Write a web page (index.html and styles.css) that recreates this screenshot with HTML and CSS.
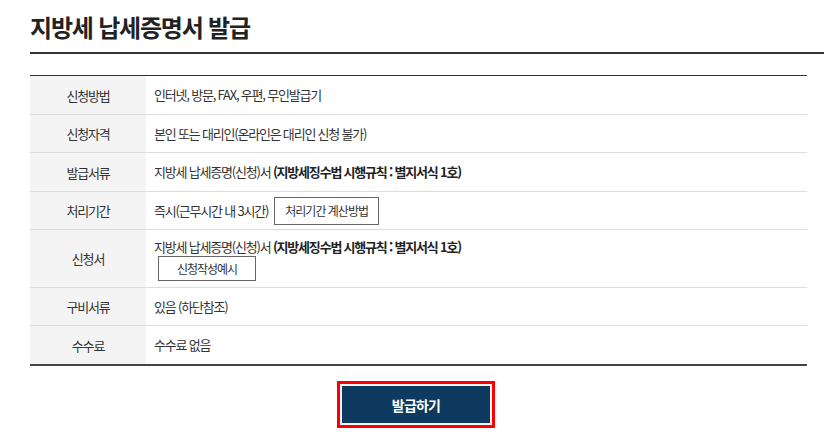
FILE: index.html
```html
<!DOCTYPE html>
<html lang="ko">
<head>
<meta charset="utf-8">
<link rel="stylesheet" href="styles.css">
</head>
<body>
<div class="page">
  <h1 class="title">지방세 납세증명서 발급</h1>
  <div class="rule"></div>
  <div class="info">
    <div class="row h39"><div class="th">신청방법</div><div class="td"><span>인터넷, 방문, FAX, 우편, 무인발급기</span></div></div>
    <div class="row"><div class="th">신청자격</div><div class="td"><span>본인 또는 대리인(온라인은 대리인 신청 불가)</span></div></div>
    <div class="row h39"><div class="th">발급서류</div><div class="td"><span>지방세 납세증명(신청)서 <b>(지방세징수법 시행규칙 : 별지서식 1호)</b></span></div></div>
    <div class="row"><div class="th">처리기간</div><div class="td"><span>즉시(근무시간 내 3시간)</span><span class="btn btn-a">처리기간 계산방법</span></div></div>
    <div class="row tall"><div class="th">신청서</div><div class="td td-stack"><div>지방세 납세증명(신청)서 <b>(지방세징수법 시행규칙 : 별지서식 1호)</b></div><span class="btn btn-b">신청작성예시</span></div></div>
    <div class="row"><div class="th">구비서류</div><div class="td"><span>있음 (하단참조)</span></div></div>
    <div class="row last"><div class="th">수수료</div><div class="td"><span>수수료 없음</span></div></div>
  </div>
  <div class="actions"><span class="focus-ring"><button class="issue">발급하기</button></span></div>
</div>
</body>
</html>
```
FILE: styles.css
```css
* { box-sizing: border-box; }
html, body { margin: 0; padding: 0; background: #fff; }
body {
  font-family: "Noto Sans CJK KR", "Noto Sans", sans-serif;
  color: #333;
}
.page { padding-left: 30px; padding-bottom: 20px; }
.title {
  margin: 0;
  padding-top: 9px;
  font-size: 24px;
  line-height: 35px;
  font-weight: 700;
  color: #222;
  letter-spacing: -1.2px;
  height: 43px;
}
.rule { height: 2px; background: #333; margin-top: 9px; }
.info {
  margin-top: 21px;
  width: 777px;
  border-top: 1px solid #333;
  border-bottom: 2px solid #444;
  font-size: 13px;
  letter-spacing: -1.2px;
}
.row {
  display: flex;
  height: 38px;
  border-bottom: 1px solid #ddd;
}
.row.h39 { height: 39px; }
.row.tall { height: 58px; }
.row.last { border-bottom: none; height: 38px; }
.th {
  width: 116px;
  flex: none;
  background: #f4f4f4;
  color: #333;
  display: flex;
  align-items: center;
  justify-content: center;
}
.td {
  flex: 1;
  padding: 0 8px;
  line-height: 18px;
  color: #333;
  display: flex;
  align-items: center;
}
.td-stack {
  flex-direction: column;
  align-items: flex-start;
  justify-content: center;
  padding-top: 1px;
}
.td b { font-weight: 700; color: #222; }
.btn {
  display: inline-block;
  border: 1px solid #666;
  font-size: 12px;
  color: #333;
  text-align: center;
  background: #fff;
  letter-spacing: -1px;
}
.btn-a { width: 105px; height: 28px; line-height: 26px; margin-left: 6px; }
.btn-b { width: 98px; height: 25px; line-height: 23px; margin-left: 4px; }
.actions { display: flex; justify-content: center; width: 777px; padding-top: 15px; }
.focus-ring {
  display: block;
  border: 3px solid #f00;
  padding: 2px;
  margin-left: -5px;
  background: #f4f4f4;
}
.issue {
  display: block;
  width: 148px;
  height: 37px;
  background: #0e3a60;
  color: #fff;
  border: none;
  font-family: inherit;
  font-size: 14px;
  font-weight: 700;
  letter-spacing: -0.8px;
}
```
